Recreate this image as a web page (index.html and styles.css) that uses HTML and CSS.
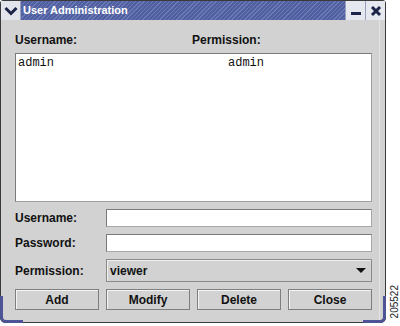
FILE: index.html
```html
<!DOCTYPE html>
<html lang="en">
<head>
    <meta charset="UTF-8">
    <title>User Administration</title>
    <link rel="stylesheet" href="styles.css">
</head>
<body>
    <div class="page">
        <div class="window">
            <div class="titlebar">
                <span class="tb-menu">
                    <svg width="14" height="10" viewBox="0 0 14 10"><path d="M1.5 2 L7 7.5 L12.5 2" fill="none" stroke="#1c2448" stroke-width="3"/></svg>
                </span>
                <span class="tb-title">User Administration</span>
                <span class="tb-btn">
                    <svg width="12" height="12" viewBox="0 0 12 12"><rect x="1" y="7" width="10" height="3" fill="#1c2448"/></svg>
                </span>
                <span class="tb-btn">
                    <svg width="12" height="12" viewBox="0 0 12 12"><path d="M2 2 L10 10 M10 2 L2 10" stroke="#1c2448" stroke-width="3"/></svg>
                </span>
            </div>

            <div class="content">
                <div class="cols">
                    <span>Username:</span>
                    <span>Permission:</span>
                </div>

                <div class="list">
                    <div class="list-row">
                        <span>admin</span>
                        <span>admin</span>
                    </div>
                </div>

                <div class="form">
                    <label>Username:</label>
                    <div class="field"></div>
                    <label>Password:</label>
                    <div class="field"></div>
                    <label>Permission:</label>
                    <div class="combo">
                        <span>viewer</span>
                        <span class="arrow"></span>
                    </div>
                </div>

                <div class="buttons">
                    <button class="btn">Add</button>
                    <button class="btn">Modify</button>
                    <button class="btn">Delete</button>
                    <button class="btn">Close</button>
                </div>
            </div>
        </div>
        <div class="fig-id">205522</div>
    </div>
</body>
</html>
```

FILE: styles.css
```css
body {
    margin: 0;
    padding: 0;
    background: #fff;
    font-family: 'Liberation Sans', Arial, sans-serif;
    color: #111;
}
.page {
    display: flex;
    align-items: flex-end;
    width: 400px;
    height: 326px;
}
.window {
    position: relative;
    width: 384px;
    height: 321px;
    border: 1px solid #3a3a3a;
    border-radius: 3px 3px 5px 5px;
    background: #d2d2d2;
    margin-bottom: 3px;
    display: flex;
    flex-direction: column;
}
/* blue corner accents of the frame */
.window::before,
.window::after {
    content: "";
    position: absolute;
    bottom: -1px;
    width: 20px;
    height: 24px;
    border-bottom: 3px solid #4c5496;
}
.window::before {
    left: -1px;
    border-left: 3px solid #4c5496;
    border-bottom-left-radius: 6px;
}
.window::after {
    right: -1px;
    border-right: 3px solid #4c5496;
    border-bottom-right-radius: 6px;
}

/* title bar */
.titlebar {
    height: 19px;
    display: flex;
    align-items: stretch;
    background: repeating-linear-gradient(135deg, #4f5f9f 0px, #4f5f9f 2px, #6b7ab6 2px, #6b7ab6 3px);
    color: #fff;
}
.tb-menu {
    width: 19px;
    display: flex;
    align-items: center;
    justify-content: center;
    background: #e2e4ec;
    border-right: 1px solid #9aa0bc;
}
.tb-title {
    flex: 1;
    padding-left: 2px;
    font-size: 11px;
    font-weight: bold;
    line-height: 19px;
}
.tb-btn {
    width: 19px;
    display: flex;
    align-items: center;
    justify-content: center;
    background: #e6e8f0;
    border-left: 1px solid #9aa0bc;
}

/* dialog body */
.content {
    flex: 1;
    padding: 13px 7px 0 14px;
    border-right: 1px solid #e4e4e4;
    margin-right: 5px;
}
.cols {
    display: grid;
    grid-template-columns: 177px 1fr;
    font-size: 12px;
    font-weight: bold;
    line-height: 14px;
}
.list {
    margin-top: 6px;
    height: 149px;
    box-sizing: border-box;
    background: #fff;
    border: 1px solid #7a7a7a;
    border-right-color: #a0a0a0;
    border-bottom-color: #a0a0a0;
    padding: 2px;
}
.list-row {
    display: grid;
    grid-template-columns: 210px 1fr;
    font-family: 'Liberation Mono', 'Courier New', monospace;
    font-size: 12px;
    line-height: 14px;
}
.form {
    margin-top: 7px;
    display: grid;
    grid-template-columns: 91px 1fr;
    grid-template-rows: 18px 18px 23px;
    row-gap: 7px;
    align-items: center;
}
.form label {
    font-size: 12px;
    font-weight: bold;
}
.field {
    height: 18px;
    box-sizing: border-box;
    background: #fff;
    border: 1px solid #7a7a7a;
    border-right-color: #a8a8a8;
    border-bottom-color: #a8a8a8;
}
.combo {
    height: 23px;
    box-sizing: border-box;
    display: flex;
    align-items: center;
    justify-content: space-between;
    padding: 0 5px 0 3px;
    border: 1px solid #8a8a8a;
    box-shadow: inset 1px 1px 0 #f0f0f0;
    font-size: 12px;
    font-weight: bold;
}
.arrow {
    width: 0;
    height: 0;
    border-left: 5px solid transparent;
    border-right: 5px solid transparent;
    border-top: 5px solid #111;
}
.buttons {
    margin-top: 7px;
    display: grid;
    grid-template-columns: repeat(4, 1fr);
    column-gap: 7px;
}
.btn {
    height: 21px;
    margin: 0;
    padding: 0;
    background: #d2d2d2;
    border: 1px solid #7e7e7e;
    box-shadow: inset 1px 1px 0 #f4f4f4;
    font-family: 'Liberation Sans', Arial, sans-serif;
    font-size: 12px;
    font-weight: bold;
    color: #111;
}
.fig-id {
    writing-mode: vertical-rl;
    transform: rotate(180deg);
    font-size: 10px;
    line-height: 10px;
    color: #222;
    margin: 0 0 8px 4px;
}
```
